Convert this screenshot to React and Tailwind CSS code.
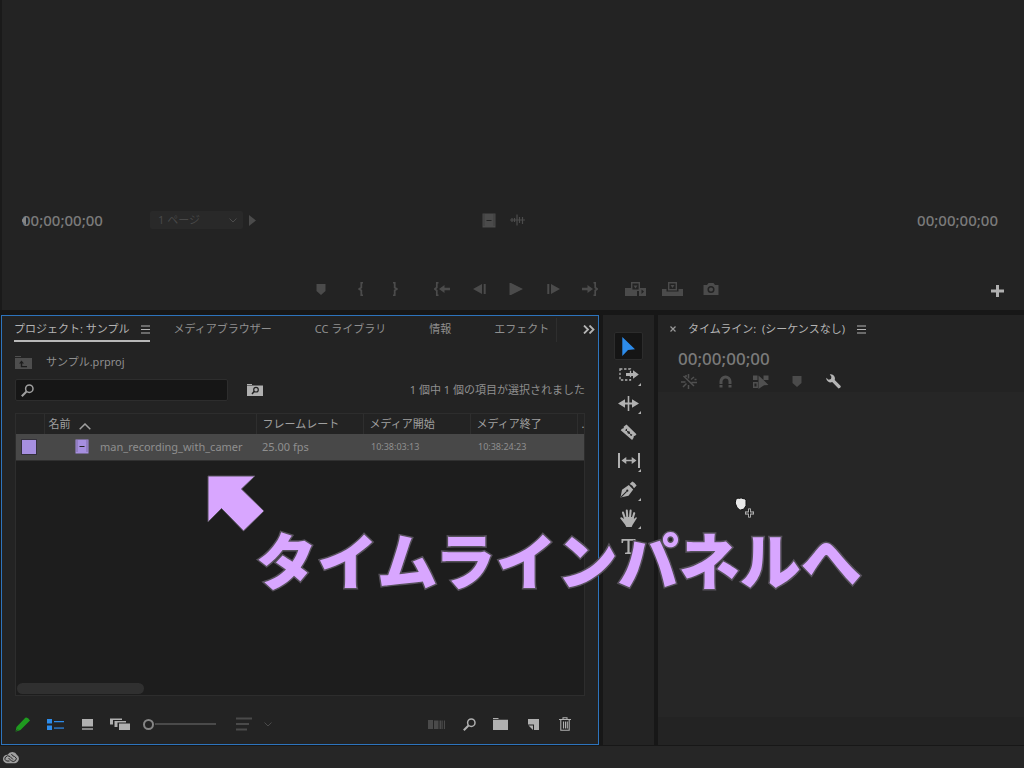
import React, { useState } from 'react';

const tabs = ['メディアブラウザー', 'CC ライブラリ', '情報', 'エフェクト'];

const clips = [
    { name: 'man_recording_with_camer', rate: '25.00 fps', start: '10:38:03:13', end: '10:38:24:23' },
];

function Icon({ w, h, className = '', children }) {
    return (
        <svg width={w} height={h} viewBox={`0 0 ${w} ${h}`} fill="currentColor" aria-hidden="true" className={`shrink-0 ${className}`}>
            {children}
        </svg>
    );
}

const MarkerIcon = () => (
    <Icon w={10} h={11}><path d="M0.5 0h9v7L5 11 0.5 7z" /></Icon>
);

const FilmIcon = ({ className }) => (
    <Icon w={14} h={15} className={className}>
        <path d="M0.5 0.5h13v14h-13z" />
        <path d="M2 1.500v12M12 1.500v12" stroke="#232323" strokeOpacity="0.6" strokeWidth="1" strokeDasharray="1 1" />
        <path d="M4.500 7.500h5" stroke="#232323" strokeWidth="1" />
    </Icon>
);

const MenuIcon = () => (
    <Icon w={9} h={9}><path d="M0 0.5h9v1H0zM0 4h9v1H0zM0 7.5h9v1H0z" /></Icon>
);

const SearchIcon = ({ size = 13 }) => (
    <svg width={size} height={size} viewBox="0 0 13 13" fill="none" stroke="currentColor" aria-hidden="true" className="shrink-0">
        <circle cx="8.3" cy="4.7" r="3.7" strokeWidth="1.5" />
        <path d="M5.5 7.5L0.8 12.2" strokeWidth="2" />
    </svg>
);

const transport = [
    { label: 'マーカーを追加', box: 'w-[37px] mr-1', icon: <MarkerIcon /> },
    {
        label: 'インをマーク', box: 'w-[34px]',
        icon: <Icon w={6} h={14}><path d="M5 0.7H3.3V5.5L1.2 7l2.1 1.5v4.8H5" fill="none" stroke="currentColor" strokeWidth="1.8" /></Icon>,
    },
    {
        label: 'アウトをマーク', box: 'w-[34px] mr-3',
        icon: <Icon w={6} h={14}><path d="M1 0.7h1.7V5.5L4.8 7 2.7 8.5v4.8H1" fill="none" stroke="currentColor" strokeWidth="1.8" /></Icon>,
    },
    {
        label: 'インへ移動', box: 'w-[37px]',
        icon: (
            <Icon w={16} h={14}>
                <path d="M4.5 0.7H2.8V5.5L0.8 7l2 1.5v4.8h1.7" fill="none" stroke="currentColor" strokeWidth="1.7" />
                <path d="M5 7l5.500-4v2.700H16v2.600h-5.500V11z" />
            </Icon>
        ),
    },
    {
        label: '1 フレーム前へ', box: 'w-[37px]',
        icon: <Icon w={13} h={10}><path d="M0 5l9-5v10zM10.7 0h2v10h-2z" /></Icon>,
    },
    {
        label: '再生', box: 'w-[37px]',
        icon: <Icon w={14} h={12}><path d="M0.500 0H2L14 6 2 12H0.500z" /></Icon>,
    },
    {
        label: '1 フレーム先へ', box: 'w-[37px]',
        icon: <Icon w={13} h={10}><path d="M13 5L4 0v10zM0.3 0h2v10h-2z" /></Icon>,
    },
    {
        label: 'アウトへ移動', box: 'w-[37px] mr-2',
        icon: (
            <Icon w={16} h={14}>
                <path d="M11.5 0.7h1.7V5.5l2 1.5-2 1.5v4.8h-1.7" fill="none" stroke="currentColor" strokeWidth="1.7" />
                <path d="M11 7L5.500 3v2.700H0v2.600h5.500V11z" />
            </Icon>
        ),
    },
    {
        label: 'インサート', box: 'w-[37px]',
        icon: (
            <Icon w={21} h={14}>
                <path d="M0 6h6v2.500h6V14H0zM14 6h7v8h-7z" />
                <path d="M16.5 7.5L19 9.5l-2.5 2.5z" fill="#232323" />
                <path d="M6.7 0.7h7.6v7.6H6.7z" fill="#232323" stroke="currentColor" strokeWidth="1.4" />
                <path d="M8.5 3.5h4l-2 3z" />
            </Icon>
        ),
    },
    {
        label: '上書き', box: 'w-[38px]',
        icon: (
            <Icon w={21} h={14}>
                <path d="M0 7h4.500v2.500h12V7H21v7H0z" />
                <path d="M6.7 0.7h7.6v7H6.7z" fill="#232323" stroke="currentColor" strokeWidth="1.4" />
                <path d="M8.5 3h4l-2 3z" />
            </Icon>
        ),
    },
    {
        label: 'フレームを書き出し', box: 'w-[38px]',
        icon: (
            <Icon w={16} h={12}>
                <path d="M0.5 2H4l1.5-2h5L12 2h3.5v10h-15z" />
                <circle cx="8" cy="6.5" r="2.8" fill="none" stroke="#232323" strokeWidth="1.5" />
            </Icon>
        ),
    },
];

const tools = [
    {
        label: '選択ツール',
        icon: <Icon w={13} h={19} className="text-[#2d8ceb]"><path d="M0.3 0L13 12.2 6 13 0.3 19z" /></Icon>,
    },
    {
        label: 'トラックの前方選択ツール', more: true,
        icon: (
            <Icon w={20} h={13}>
                <path d="M1 1h10.5v11H1z" fill="none" stroke="currentColor" strokeWidth="1.3" strokeDasharray="2.4 1.7" />
                <path d="M7 5h7V2.2l5.8 4.3L14 10.8V8H7z" />
            </Icon>
        ),
    },
    {
        label: 'リップルツール', more: true,
        icon: <Icon w={21} h={15}><path d="M9.7 0h1.6v15H9.7zM0 7.5L7 3.2v3.3h7V3.2l7 4.3-7 4.3V8.5H7v3.3z" /></Icon>,
    },
    {
        label: 'レーザーツール',
        icon: (
            <Icon w={17} h={17}>
                <path d="M6.5 0.5L16.5 10.2 14.9 12l-0.7-0.2-0.7 1.2 0.2 0.7-1.6 2.3L0.7 6.3l1.5-1.8 0.8 0.2 0.9-1.2-0.3-0.8z" />
                <path d="M5.8 5.8l5.7 5.5M6.8 4.8l-1 2.2M11.8 10.2l-1 1.8" stroke="#232323" strokeWidth="1" />
                <circle cx="8.7" cy="8.5" r="1.2" fill="#232323" />
            </Icon>
        ),
    },
    {
        label: 'スリップツール', more: true,
        icon: <Icon w={22} h={15}><path d="M0 0h2v15H0zM20 0h2v15h-2zM3.5 7.5L8.3 4v2.8h5.4V4l4.8 3.5-4.8 3.5V8.2H8.3V11z" /></Icon>,
    },
    {
        label: 'ペンツール', more: true,
        icon: (
            <Icon w={17} h={17}>
                <path d="M0.5 16.5L2 8.8 8.8 4l4.4 4.4L8.5 14.8zM9.7 3L12.3 0.4Q14.8 1.2 16.6 4.6L14 7.3Q12.8 4.2 9.7 3z" />
                <path d="M1.2 15.8l5.5-5.4" stroke="#232323" strokeWidth="1.1" />
                <circle cx="7.3" cy="9.7" r="1.1" fill="#232323" />
            </Icon>
        ),
    },
    {
        label: '手のひらツール', more: true,
        icon: (
            <Icon w={17} h={18}>
                <path d="M4.8 9L3 3.6M7.3 8.5L6.8 1.6M10 8.5l0.6-6.9M12.6 9.5l1.6-5.3" stroke="currentColor" strokeWidth="2.1" strokeLinecap="round" />
                <path d="M3.9 8h9.7l0.3 2 1.7-1.6q1.6-0.4 1.2 0.8L12.5 16 11.7 18H6.3L5 15.5 0.3 9.6Q0 8 1.6 8.2l2.6 1.8z" />
            </Icon>
        ),
    },
    {
        label: '横書き文字ツール',
        icon: <Icon w={15} h={15}><path d="M0.5 0h14v4h-1.4l-0.5-2.3H8.6v11.6l2.4 0.4V15H4v-1.3l2.4-0.4V1.7h-4L1.9 4H0.5z" /></Icon>,
    },
];

const timelineTools = [
    {
        label: 'ネストまたは個別に挿入', color: 'text-[#505050]',
        icon: (
            <Icon w={16} h={15}>
                <path d="M7.500 0v4.500M2.500 2l10.500 10M7.500 11v4M0 8h4.500M10 5.500L13 3M2 13l3.500-3.500M10.500 8.500H16M5 1v2M13.500 5.500h2" fill="none" stroke="currentColor" strokeWidth="1.5" />
            </Icon>
        ),
    },
    {
        label: 'スナップ', color: 'text-[#505050]',
        icon: <Icon w={13} h={13}><path d="M2 12.5V6.5a4.5 4.5 0 0 1 9 0v6" fill="none" stroke="currentColor" strokeWidth="3" /><path d="M0 9.5h13" stroke="#232323" strokeWidth="1" /></Icon>,
    },
    {
        label: 'リンクされた選択', color: 'text-[#505050]',
        icon: (
            <Icon w={16} h={14}>
                <path d="M0 0.500h4.500V5H0zM5.500 0.500L10.500 5V0.500h5V5H10.500l5 5-4.500 0.300L5.500 14z" />
                <path d="M0.7 7.7h3.5v4.6H0.7z" fill="none" stroke="currentColor" strokeWidth="1.4" />
            </Icon>
        ),
    },
    { label: 'マーカーを追加', color: 'text-[#4b4b4b]', icon: <MarkerIcon /> },
    {
        label: 'タイムライン表示設定', color: 'text-[#b4b4b4]',
        icon: <Icon w={15} h={15}><path d="M3.8 0.2A4.4 4.4 0 0 1 8.7 6l6 6q0.6 1.8-2.2 2.5L6.2 8.1A4.4 4.4 0 0 1 0.2 3.8L2.6 5.7 5 5 5.4 2.7z" /></Icon>,
    },
];

function SourcePanel() {
    return (
        <section className="flex min-h-0 flex-col justify-end border-l-2 border-[#1a1a1a] bg-[#232323] pb-[9px] text-[#4b4b4b]">
            <div className="grid h-6 grid-cols-[1fr_auto_1fr] items-center pr-[26px] pl-5">
                <div className="flex items-center">
                    <span className="relative w-32 text-[15px] leading-6 font-medium text-[#7a7a7a]">
                        00;00;00;00
                        <Icon w={4} h={9} className="absolute top-2 left-0 text-[#858585]"><path d="M4 0v9L0 5.500V3.500z" /></Icon>
                    </span>
                    <span className="relative flex items-center">
                        <select aria-label="ページ" className="h-[18px] w-[93px] appearance-none rounded-xs bg-[#292929] pl-2 text-[11px] leading-[18px] text-[#484848]">
                            <option>1 ページ</option>
                        </select>
                        <Icon w={8} h={5} className="pointer-events-none absolute right-1.5"><path d="M0.500 0.500L4 4 7.500 0.500" fill="none" stroke="currentColor" /></Icon>
                    </span>
                    <button aria-label="再生位置へ" className="ml-1.5"><Icon w={7} h={11}><path d="M0 0l7 5.500L0 11z" /></Icon></button>
                </div>
                <div className="flex items-center gap-3.5 pr-[13px]">
                    <button aria-label="ビデオのみドラッグ"><FilmIcon /></button>
                    <button aria-label="オーディオのみドラッグ">
                        <Icon w={15} h={12}>
                            <path d="M0 6h15M2 4v4M4.500 4v4M7 0.500v11M9.500 3v6M12.500 3v7" fill="none" stroke="currentColor" strokeWidth="1.200" />
                        </Icon>
                    </button>
                </div>
                <span className="text-right text-[15px] leading-6 font-medium text-[#7a7a7a]">00;00;00;00</span>
            </div>
            <div className="mt-[45px] grid h-6 grid-cols-[1fr_auto_1fr] items-center pr-5 pl-[26px]">
                <div className="col-start-2 flex">
                    {transport.map((b) => (
                        <button key={b.label} aria-label={b.label} className={`flex h-6 items-center justify-center ${b.box}`}>
                            {b.icon}
                        </button>
                    ))}
                </div>
                <button aria-label="ボタンエディター" className="justify-self-end pt-1 text-[#b0b0b0]">
                    <Icon w={13} h={12}><path d="M5 0h3v4.500h5v3H8V12H5V7.500H0v-3h5z" /></Icon>
                </button>
            </div>
        </section>
    );
}

function ProjectPanel() {
    const [query, setQuery] = useState('');
    const [zoom, setZoom] = useState(0);

    return (
        <section className="flex min-h-0 min-w-0 flex-col border border-[#2d74bd] bg-[#232323] text-[11px] text-[#8f8f8f]">
            {/* Tabs */}
            <div className="flex h-7 shrink-0 pl-3">
                <div className="my-0.5 flex min-w-0 flex-1 items-start gap-[23px] overflow-hidden border-r border-[#2e2e2e] whitespace-nowrap">
                    <div className="flex h-6 items-center gap-3 border-b-2 border-[#b8b8b8] text-[#b4b4b4]">
                        <button>プロジェクト: サンプル</button>
                        <button aria-label="パネルメニュー"><MenuIcon /></button>
                    </div>
                    {tabs.map((t) => (
                        <button key={t} className="h-[22px] shrink-0 pr-5">{t}</button>
                    ))}
                </div>
                <button aria-label="その他のパネル" className="flex h-[26px] w-[41px] items-center justify-center pl-[22px] text-[#b4b4b4]">
                    <Icon w={12} h={9}><path d="M1 0.500l4 4-4 4M6.500 0.500l4 4-4 4" fill="none" stroke="currentColor" strokeWidth="1.800" /></Icon>
                </button>
            </div>

            <div className="flex min-h-0 flex-1 flex-col px-[13px]">
                {/* Project path */}
                <div className="mt-1.5 flex h-6 items-center gap-3.5">
                    <button aria-label="上の階層へ" className="text-[#4e4e4e]">
                        <Icon w={17} h={13}>
                            <path d="M0 0h6v1H0zM0 2h17v11H0z" />
                            <path d="M4 7.500l2.500-3 2.500 3H7.200V10H12v1.200H5.800V7.500z" fill="#1d1d1d" />
                        </Icon>
                    </button>
                    <span>サンプル.prproj</span>
                </div>

                {/* Search */}
                <div className="mt-[5px] flex h-[22px] items-center">
                    <label className="flex h-[22px] w-[213px] items-center rounded-xs border border-[#2d2d2d] bg-[#161616] pl-[5px] text-[#a0a0a0]">
                        <SearchIcon />
                        <input
                            type="text"
                            aria-label="検索"
                            value={query}
                            onChange={(e) => setQuery(e.target.value)}
                            className="h-4 min-w-0 flex-1 bg-transparent px-2 focus:outline-none"
                        />
                    </label>
                    <button aria-label="検索ビンを作成" className="ml-[19px] text-[#b0b0b0]">
                        <Icon w={16} h={12}>
                            <path d="M0 0h5v1H0zM0 1.500h16V12H0z" />
                            <circle cx="9" cy="5.700" r="2.300" fill="none" stroke="#232323" strokeWidth="1.200" />
                            <path d="M7.300 7.300L5 10" stroke="#232323" strokeWidth="1.500" />
                        </Icon>
                    </button>
                    <span className="ml-auto whitespace-nowrap">1 個中 1 個の項目が選択されました</span>
                </div>

                {/* Clip list */}
                <div className="mt-3 flex min-h-0 flex-1 flex-col border border-[#2d2d2d] bg-[#1d1d1d]">
                    <table className="w-full table-fixed border-collapse text-left whitespace-nowrap">
                        <colgroup>
                            <col className="w-7" />
                            <col />
                            <col className="w-[107px]" />
                            <col className="w-[107px]" />
                            <col className="w-[107px]" />
                            <col className="w-[7px]" />
                        </colgroup>
                        <thead>
                            <tr className="h-5 bg-[#232323] text-[#a0a0a0]">
                                <th className="border-r border-[#2e2e2e]"></th>
                                <th className="border-r border-[#2e2e2e] pl-1 font-normal">
                                    <span className="flex items-center gap-2">
                                        名前
                                        <Icon w={12} h={7} className="mt-1"><path d="M0.700 6.300L6 1l5.300 5.300" fill="none" stroke="currentColor" strokeWidth="1.500" /></Icon>
                                    </span>
                                </th>
                                <th className="border-r border-[#2e2e2e] pl-1.5 font-normal">フレームレート</th>
                                <th className="border-r border-[#2e2e2e] pl-1.5 font-normal">メディア開始</th>
                                <th className="border-r border-[#2e2e2e] pl-1.5 font-normal">メディア終了</th>
                                <th className="pl-1 font-normal">.</th>
                            </tr>
                        </thead>
                        <tbody>
                            {clips.map((c) => (
                                <tr key={c.name} className="h-[26px] border-b border-[#303030] bg-[#484848]">
                                    <td className="pl-[5px]">
                                        <span className="block size-4 border border-[#33303a] bg-[#a68fe0]"></span>
                                    </td>
                                    <td className="pl-[31px]">
                                        <span className="flex items-center gap-[11px]">
                                            <FilmIcon className="text-[#a68fe0]" />
                                            <span>{c.name}</span>
                                        </span>
                                    </td>
                                    <td className="pl-1.5">{c.rate}</td>
                                    <td className="pl-2 text-[9px] leading-4">{c.start}</td>
                                    <td className="pl-2 text-[9px] leading-4">{c.end}</td>
                                    <td></td>
                                </tr>
                            ))}
                        </tbody>
                    </table>
                    <div className="mt-auto mb-px ml-px h-[11px] w-[127px] rounded-full bg-[#303030]"></div>
                </div>

                {/* Bottom toolbar */}
                <div className="flex h-12 shrink-0 items-center justify-between pt-2 pr-3.5 text-[#b0b0b0]">
                    <div className="flex items-center">
                        <button aria-label="読み取り/書き込み" className="w-8 text-[#1f9a1f]">
                            <Icon w={15} h={15}><path d="M0.500 14.800L1.500 10 10.300 0.800Q12.500-0.300 15 3.500L5.500 13z" /><path d="M1 14.300l1.800-1.800" stroke="#232323" strokeWidth="0.800" /></Icon>
                        </button>
                        <button aria-label="リスト表示" className="w-[35px] text-[#2d8ceb]">
                            <Icon w={17} h={11}>
                                <path d="M0 0h5v4.500H0zM0 6.500h5V11H0zM7 2h10v1.300H7z" />
                                <path d="M7 8.200h10v1.800H7z" fill="#2a67a8" />
                            </Icon>
                        </button>
                        <button aria-label="アイコン表示" className="w-7">
                            <Icon w={11} h={11}><path d="M0 0h11v7.500H0z" /><path d="M0 9h11v2H0z" fill="#858585" /></Icon>
                        </button>
                        <button aria-label="フリーフォーム表示" className="w-[33px]">
                            <Icon w={20} h={12}>
                                <path d="M0 0.500h12V2H3v4.500H0zM4.500 3H16v1.500H7.500V9h-3zM9 5.500h11V12H9z" />
                            </Icon>
                        </button>
                        <label className="flex">
                            <input
                                type="range"
                                aria-label="アイコンのサイズ"
                                value={zoom}
                                onChange={(e) => setZoom(e.target.value)}
                                className="h-3 w-[73px] cursor-pointer appearance-none bg-[linear-gradient(#4a4a4a,#4a4a4a)] bg-[length:61px_2px] bg-right bg-no-repeat [&::-webkit-slider-thumb]:size-[11px] [&::-webkit-slider-thumb]:appearance-none [&::-webkit-slider-thumb]:rounded-full [&::-webkit-slider-thumb]:border-2 [&::-webkit-slider-thumb]:border-[#858585] [&::-webkit-slider-thumb]:bg-[#232323]"
                            />
                        </label>
                        <button aria-label="アイコンの並べ替え" className="ml-5 flex items-center gap-3 text-[#4a4a4a]">
                            <Icon w={16} h={14}><path d="M0 0.500h16v2H0zM0 6h13v2H0zM0 11.500h11v2H0z" /></Icon>
                            <Icon w={8} h={5}><path d="M0.500 0.500L4 4 7.500 0.500" fill="none" stroke="currentColor" /></Icon>
                        </button>
                    </div>
                    <div className="flex items-center">
                        <button aria-label="シーケンスへオート編入" className="w-[35px] text-[#4a4a4a]">
                            <Icon w={17} h={9}><path d="M0 0h5v9H0zM6 0.500h4.500V9H6zM11.500 0.500h2V9h-2zM14.300 0.500h0.800V9h-0.800zM16 0.500h1V9h-1z" /></Icon>
                        </button>
                        <button aria-label="検索" className="w-[30px]"><SearchIcon /></button>
                        <button aria-label="新規ビン" className="w-[35px]">
                            <Icon w={15} h={12}><path d="M0 0h5.500v1H0zM0 1.700h15V12H0z" /></Icon>
                        </button>
                        <button aria-label="新規項目" className="w-[31px]">
                            <Icon w={11} h={11}><path d="M0 0h11v11H6V5.500H0z" /><path d="M0.500 6.500h4.500V11z" /></Icon>
                        </button>
                        <button aria-label="消去">
                            <Icon w={12} h={14}>
                                <path d="M4 2V0.800h4V2M0 2.500h12M1.800 3v10.200h8.400V3M4.500 4.500v7M6.500 4.500v7M8.300 4.500v7" fill="none" stroke="currentColor" strokeWidth="1.100" />
                            </Icon>
                        </button>
                    </div>
                </div>
            </div>
        </section>
    );
}

function ToolsPanel() {
    const [active, setActive] = useState(0);

    return (
        <section className="min-h-0 bg-[#232323] pt-[17px]">
            <div className="flex h-[229px] flex-col items-center justify-between text-[#b0b0b0]">
                {tools.map((t, i) => (
                    <button
                        key={t.label}
                        aria-label={t.label}
                        onClick={() => setActive(i)}
                        className={`relative flex h-7 w-[29px] items-center justify-center rounded-xs border ${i === active ? 'border-[#2c2c2c] bg-[#151515]' : 'border-transparent'}`}
                    >
                        {t.icon}
                        {t.more && <Icon w={3} h={3} className="absolute right-px bottom-0.5"><path d="M3 0v3H0z" /></Icon>}
                    </button>
                ))}
            </div>
        </section>
    );
}

function TimelinePanel() {
    return (
        <section className="flex min-h-0 min-w-0 flex-col bg-[#232323] text-[11px] text-[#b4b4b4]">
            <div className="flex h-7 shrink-0 items-center gap-3 pl-3">
                <button aria-label="閉じる" className="text-[#999999]">
                    <Icon w={6} h={6}><path d="M0.500 0.500l5 5M5.500 0.500l-5 5" fill="none" stroke="currentColor" strokeWidth="1.200" /></Icon>
                </button>
                <span className="whitespace-pre">タイムライン:  (シーケンスなし)</span>
                <button aria-label="パネルメニュー"><MenuIcon /></button>
            </div>
            <div className="mt-1 h-6 pl-5 text-[17px] leading-6 font-medium text-[#7a7a7a]">00;00;00;00</div>
            <div className="flex h-[21px] shrink-0 items-center pl-[13px]">
                {timelineTools.map((t) => (
                    <button key={t.label} aria-label={t.label} className={`flex h-5 w-9 items-center justify-center ${t.color}`}>
                        {t.icon}
                    </button>
                ))}
            </div>
            <div className="min-h-0 flex-1 bg-[#262626]"></div>
            <div className="h-7 shrink-0"></div>
        </section>
    );
}

// Note that floats above the panels and points from the clip to the timeline
function Callout() {
    return (
        <div className="pointer-events-none absolute top-[475px] left-[207px]">
            <svg width="58" height="57" viewBox="0 0 58 57" className="block">
                <path d="M1 1h47L34.500 14 57 36 36.500 56 14.500 33.500 1 47z" fill="#d8a6ff" stroke="#55505a" strokeWidth="1" />
            </svg>
            <p className="-mt-1.5 ml-[49px] text-[61px] leading-[72px] font-black whitespace-nowrap text-[#d8a6ff] [-webkit-text-stroke:3px_#55505a] [paint-order:stroke]">
                タイムラインパネルへ
            </p>
        </div>
    );
}

function DragCursor() {
    return (
        <svg width="22" height="22" viewBox="0 0 22 22" className="pointer-events-none absolute top-[497px] left-[734px]">
            <path d="M2 2l2-1 1.500 0.500L7 0.800l2 0.800 2 0.200 1 1.700 0 5L10 12l-4 1.200L3 10.500 1.200 6z" fill="#e8e8e8" stroke="#111111" strokeWidth="1" />
            <path d="M15.500 11.500v9M11 16h9" stroke="#c8c8c8" strokeWidth="2.800" />
            <path d="M15.500 12.200v7.600M11.700 16h7.600" stroke="#111111" strokeWidth="1.200" />
        </svg>
    );
}

export default function App() {
    return (
        <div className="relative grid h-screen grid-rows-[310fr_436fr_22px] overflow-hidden bg-[#171717] font-['Noto_Sans','Noto_Sans_CJK_JP',sans-serif]">
            <SourcePanel />
            <main className="grid min-h-0 grid-cols-[598fr_51px_366fr] gap-1 pt-[5px] pb-px pl-px">
                <ProjectPanel />
                <ToolsPanel />
                <TimelinePanel />
            </main>
            <footer className="flex items-center bg-[#262626] pl-0.5 text-[#a0a0a0]">
                <button aria-label="Creative Cloud">
                    <Icon w={17} h={13}>
                        <path d="M5 12.300A4.300 4.300 0 1 1 5.600 3.700 5.300 5.300 0 0 1 15 4a4.600 4.600 0 0 1-2.500 8.300z" />
                        <path d="M11 8.500L8 5.500Q5.500 3.700 3.500 6T4.500 10H7.500M6.500 7l3 3q2.500 1.300 4.300-0.800T12.500 5.500Q10 5 9.500 3" fill="none" stroke="#262626" strokeWidth="1" />
                    </Icon>
                </button>
            </footer>
            <Callout />
            <DragCursor />
        </div>
    );
}
